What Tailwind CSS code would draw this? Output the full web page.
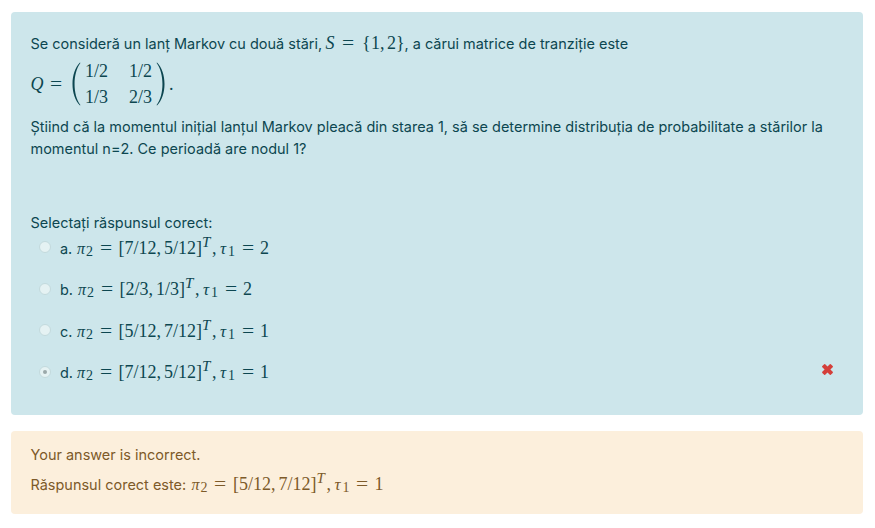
<!DOCTYPE html>
<html lang="ro">
<head>
<meta charset="utf-8">
<title>Lanț Markov</title>
<script src="https://cdn.jsdelivr.net/npm/@tailwindcss/browser@4"></script>
</head>
<body class="bg-white">
<main class="flex h-[528px] w-[875px] flex-col gap-4 pt-3 pl-[11px] font-['Inter',sans-serif] text-[14.48px] leading-[22px]">
  <section class="h-[403px] w-[852px] rounded bg-[#cde6eb] pt-[20px] pl-[19.500px] text-[#0c4650]">
    <div class="flex h-[25px] items-baseline whitespace-pre leading-[22px]">
      <span class="w-[295px]">Se consideră un lanț Markov cu două stări,</span>
      <span class="flex w-[79px] items-baseline font-['Liberation_Serif',serif] text-[18px]"><i class="w-[17px]">S</i><span class="w-[20px]"><span class="inline-block origin-left scale-x-120">=</span></span><span class="w-[9px]">{</span><span class="w-[9px]">1</span><span class="w-[7px]">,</span><span class="w-[9px]">2</span><span>}</span></span>
      <span>, a cărui matrice de tranziție este</span>
    </div>
    <div class="flex h-[48px] items-center pt-[6px] font-['Liberation_Serif',serif] text-[18px]">
      <i class="w-[19.500px]">Q</i><span class="w-[21px]"><span class="inline-block origin-left scale-x-120">=</span></span>
      <svg class="h-[44px] w-[10px]" viewBox="0 0 10 44" fill="currentColor"><path d="M9 .5C-1 10 -1 34 9 43.500L9.400 43C1.600 33 1.600 11 9.400 1Z"/></svg>
      <div class="ml-[4px] grid grid-cols-[44px_23px] leading-[26px]"><span>1/2</span><span>1/2</span><span>1/3</span><span>2/3</span></div>
      <svg class="ml-[4px] h-[44px] w-[10px]" viewBox="0 0 10 44" fill="currentColor"><path d="M1 .5C11 10 11 34 1 43.500L.6 43C8.400 33 8.400 11 .6 1Z"/></svg>
      <span class="ml-[3px]">.</span>
    </div>
    <p class="mt-[11px] whitespace-nowrap">Știind că la momentul inițial lanțul Markov pleacă din starea 1, să se determine distribuția de probabilitate a stărilor la<br>momentul n=2. Ce perioadă are nodul 1?</p>
    <p class="mt-[52px]">Selectați răspunsul corect:</p>
    <div class="ml-[8.500px] flex flex-col">
      <div class="flex h-[41.5px] items-start">
        <span class="mt-[7px] h-[12px] w-[12px] rounded-full border border-[#c3dadd] bg-[#e5f2f3]"></span>
        <div class="ml-[9px] flex h-[26px] items-baseline pt-px leading-[26px]"><span class="w-[17px]">a.</span>
          <div class="flex items-baseline whitespace-pre font-['Liberation_Serif',serif] text-[18px]"><i class="w-[9px] text-[16px]">π</i><span class="relative top-[2px] w-[13.5px] text-[14px]">2</span><span class="w-[19px]"><span class="inline-block origin-left scale-x-120">=</span></span><span>[7/12</span><span class="w-[7.500px]">,</span><span>5/12]</span><i class="relative -top-[7px] w-[10px] text-[15px]">T</i><span class="w-[8px]">,</span><i class="w-[8px] text-[17px]">τ</i><span class="relative top-[2px] w-[13.5px] text-[14px]">1</span><span class="w-[18.5px]"><span class="inline-block origin-left scale-x-120">=</span></span><span>2</span></div></div>
      </div>
      <div class="flex h-[41.5px] items-start">
        <span class="mt-[7px] h-[12px] w-[12px] rounded-full border border-[#c3dadd] bg-[#e5f2f3]"></span>
        <div class="ml-[9px] flex h-[26px] items-baseline leading-[26px]"><span class="w-[18px]">b.</span>
          <div class="flex items-baseline whitespace-pre font-['Liberation_Serif',serif] text-[18px]"><i class="w-[9px] text-[16px]">π</i><span class="relative top-[2px] w-[13.5px] text-[14px]">2</span><span class="w-[19px]"><span class="inline-block origin-left scale-x-120">=</span></span><span>[2/3</span><span class="w-[7.500px]">,</span><span>1/3]</span><i class="relative -top-[7px] w-[10px] text-[15px]">T</i><span class="w-[8px]">,</span><i class="w-[8px] text-[17px]">τ</i><span class="relative top-[2px] w-[13.5px] text-[14px]">1</span><span class="w-[18.5px]"><span class="inline-block origin-left scale-x-120">=</span></span><span>2</span></div></div>
      </div>
      <div class="flex h-[41.5px] items-start">
        <span class="mt-[7px] h-[12px] w-[12px] rounded-full border border-[#c3dadd] bg-[#e5f2f3]"></span>
        <div class="ml-[9px] flex h-[26px] items-baseline pt-px leading-[26px]"><span class="w-[17px]">c.</span>
          <div class="flex items-baseline whitespace-pre font-['Liberation_Serif',serif] text-[18px]"><i class="w-[9px] text-[16px]">π</i><span class="relative top-[2px] w-[13.5px] text-[14px]">2</span><span class="w-[19px]"><span class="inline-block origin-left scale-x-120">=</span></span><span>[5/12</span><span class="w-[7.500px]">,</span><span>7/12]</span><i class="relative -top-[7px] w-[10px] text-[15px]">T</i><span class="w-[8px]">,</span><i class="w-[8px] text-[17px]">τ</i><span class="relative top-[2px] w-[13.5px] text-[14px]">1</span><span class="w-[18.5px]"><span class="inline-block origin-left scale-x-120">=</span></span><span>1</span></div></div>
      </div>
      <div class="flex h-[41.5px] items-start">
        <span class="mt-[7px] flex h-[12px] w-[12px] items-center justify-center rounded-full border border-[#c3dadd] bg-[#e5f2f3]"><span class="h-[4px] w-[4px] rounded-full bg-[#9ba9aa]"></span></span>
        <div class="ml-[9px] flex h-[26px] items-baseline leading-[26px]"><span class="w-[17px]">d.</span>
          <div class="flex items-baseline whitespace-pre font-['Liberation_Serif',serif] text-[18px]"><i class="w-[9px] text-[16px]">π</i><span class="relative top-[2px] w-[13.5px] text-[14px]">2</span><span class="w-[19px]"><span class="inline-block origin-left scale-x-120">=</span></span><span>[7/12</span><span class="w-[7.500px]">,</span><span>5/12]</span><i class="relative -top-[7px] w-[10px] text-[15px]">T</i><span class="w-[8px]">,</span><i class="w-[8px] text-[17px]">τ</i><span class="relative top-[2px] w-[13.5px] text-[14px]">1</span><span class="w-[18.5px]"><span class="inline-block origin-left scale-x-120">=</span></span><span>1</span></div></div>
        <svg class="mt-[5px] mr-[30px] ml-auto h-[11px] w-[11px]" viewBox="0 0 11 11" fill="#d43f3a"><path d="M2.200.2Q2.700-.2 3.200.2L5.500 2.500 7.800.2Q8.300-.2 8.800.2L10.700 2.100Q11.200 2.600 10.700 3.200L8.400 5.500 10.700 7.800Q11.200 8.300 10.700 8.900L8.800 10.800Q8.300 11.200 7.800 10.800L5.500 8.500 3.200 10.800Q2.700 11.200 2.200 10.800L.3 8.900Q-.2 8.300.3 7.800L2.600 5.500.3 3.200Q-.2 2.600.3 2.100Z"/></svg>
      </div>
    </div>
  </section>
  <section class="h-[83px] w-[852px] rounded bg-[#fcefdc] pt-[13px] pl-[19.500px] text-[#7d5a29]">
    <p>Your answer is incorrect.</p>
    <div class="mt-[5px] flex h-[26px] items-baseline leading-[26px]"><span class="w-[161px]">Răspunsul corect este:</span>
      <div class="flex items-baseline whitespace-pre font-['Liberation_Serif',serif] text-[18px]"><i class="w-[9px] text-[16px]">π</i><span class="relative top-[2px] w-[13.5px] text-[14px]">2</span><span class="w-[19px]"><span class="inline-block origin-left scale-x-120">=</span></span><span>[5/12</span><span class="w-[7.500px]">,</span><span>7/12]</span><i class="relative -top-[7px] w-[10px] text-[15px]">T</i><span class="w-[8px]">,</span><i class="w-[8px] text-[17px]">τ</i><span class="relative top-[2px] w-[13.5px] text-[14px]">1</span><span class="w-[18.5px]"><span class="inline-block origin-left scale-x-120">=</span></span><span>1</span></div></div>
  </section>
</main>
</body>
</html>
